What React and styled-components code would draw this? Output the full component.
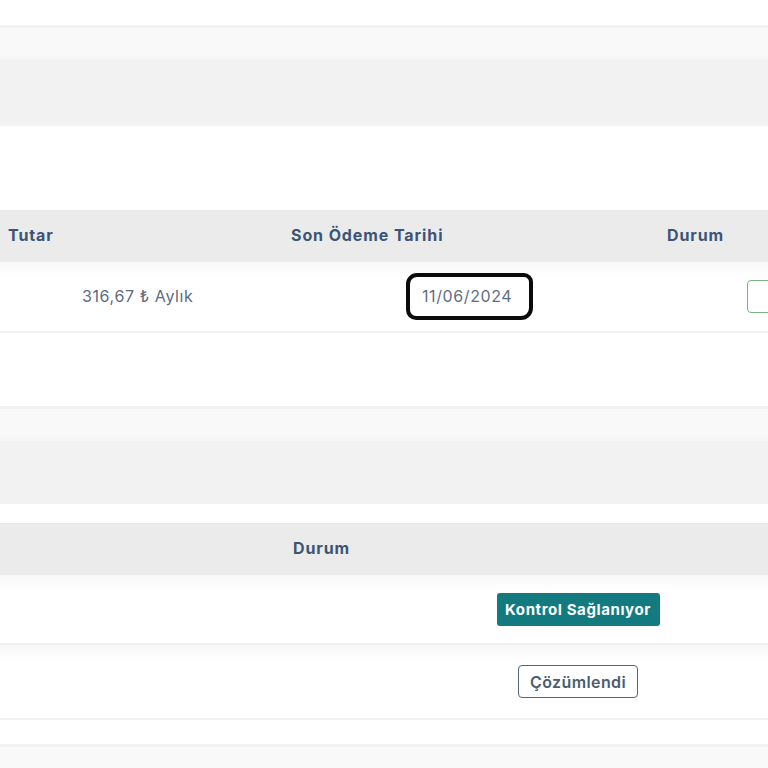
import React from 'react';
import styled, { createGlobalStyle } from 'styled-components';

const GlobalStyle = createGlobalStyle`
  html, body {
    margin: 0;
    padding: 0;
    background: #ffffff;
    overflow: hidden;
  }
  body {
    font-family: Inter, "Open Sans", Arial, sans-serif;
    color: #5b6b80;
  }
`;

const Page = styled.div`
  width: 768px;
  height: 768px;
  overflow: hidden;
  display: flex;
  flex-direction: column;
  padding-top: ${(p) => p.top}px;
  box-sizing: border-box;
`;

const Spacer = styled.div`
  flex: none;
  height: ${(p) => p.h}px;
`;

const Panel = styled.div`
  flex: none;
  border-top: 3px solid #f2f2f2;
  border-bottom: ${(p) => (p.bottomLine ? '2px solid #f4f4f4' : 'none')};
`;

const PanelHead = styled.div`
  height: ${(p) => p.h}px;
  background: linear-gradient(#f9f9f9, #f9f9f9 80%, #f5f5f5);
`;

const PanelBody = styled.div`
  height: ${(p) => p.h}px;
  background: #f2f2f2;
`;

const Table = styled.div`
  flex: none;
  width: 900px;
`;

const HeadRow = styled.div`
  display: grid;
  grid-template-columns: ${(p) => p.cols};
  height: 52px;
  align-items: center;
  background: #ebebeb;
  border-top: 1px solid #e8e8e8;
  box-sizing: border-box;
  padding-bottom: 3px;
`;

const HeadCell = styled.div`
  padding-left: ${(p) => p.pl || 0}px;
  font-size: 16px;
  font-weight: 700;
  color: #3c5574;
  letter-spacing: 0.9px;
  white-space: nowrap;
`;

const Row = styled.div`
  display: grid;
  grid-template-columns: ${(p) => p.cols};
  height: ${(p) => p.h}px;
  align-items: center;
  background: linear-gradient(#f7f7f7, #ffffff 22%);
  border-bottom: 2px solid #f1f1f1;
  box-sizing: border-box;
  padding-bottom: ${(p) => p.pb || 0}px;
`;

const Cell = styled.div`
  padding-left: ${(p) => p.pl || 0}px;
  display: flex;
  justify-content: ${(p) => (p.center ? 'center' : 'flex-start')};
  font-size: 16px;
  letter-spacing: 0.6px;
  color: #5b6b80;
  white-space: nowrap;
`;

const DateMark = styled.span`
  display: inline-flex;
  align-items: center;
  width: 127px;
  height: 47px;
  box-sizing: border-box;
  padding-left: 12px;
  border: 4px solid #0b0b0b;
  border-radius: 11px 9px 12px 10px;
  font-size: 16px;
  letter-spacing: 0.6px;
  color: #5f6e82;
`;

const OutlineTag = styled.span`
  display: inline-flex;
  align-items: center;
  justify-content: center;
  box-sizing: border-box;
  height: 33px;
  width: ${(p) => p.w}px;
  border: 1.5px solid ${(p) => p.line};
  border-radius: 4px;
  background: #ffffff;
  font-size: 16px;
  font-weight: 600;
  letter-spacing: 0.4px;
  color: #4a5d72;
`;

const SolidTag = styled.span`
  display: inline-flex;
  align-items: center;
  justify-content: center;
  box-sizing: border-box;
  height: 33px;
  width: 163px;
  border-radius: 3px;
  background: #137b80;
  font-size: 15px;
  font-weight: 700;
  color: #ffffff;
  letter-spacing: 0.6px;
`;

const paymentCols = '200px 360px 340px';
const ticketCols = '250px 200px 256px 194px';

export default function App() {
  return (
    <>
      <GlobalStyle />
      <Page top={25}>
        <Panel bottomLine>
          <PanelHead h={32} />
          <PanelBody h={64} />
        </Panel>

        <Spacer h={84} />

        <Table>
          <HeadRow cols={paymentCols}>
            <HeadCell pl={8}>Tutar</HeadCell>
            <HeadCell pl={91}>Son Ödeme Tarihi</HeadCell>
            <HeadCell pl={107}>Durum</HeadCell>
          </HeadRow>
          <Row cols={paymentCols} h={71} pb={1}>
            <Cell pl={82}>316,67 ₺ Aylık</Cell>
            <Cell pl={206}>
              <DateMark>11/06/2024</DateMark>
            </Cell>
            <Cell pl={187}>
              <OutlineTag w={120} line="#7fb27f" />
            </Cell>
          </Row>
        </Table>

        <Spacer h={73} />

        <Panel>
          <PanelHead h={32} />
          <PanelBody h={63} />
        </Panel>

        <Spacer h={19} />

        <Table>
          <HeadRow cols={ticketCols}>
            <HeadCell />
            <HeadCell pl={43}>Durum</HeadCell>
            <HeadCell />
            <HeadCell />
          </HeadRow>
          <Row cols={ticketCols} h={70}>
            <Cell />
            <Cell />
            <Cell center>
              <SolidTag>Kontrol Sağlanıyor</SolidTag>
            </Cell>
            <Cell />
          </Row>
          <Row cols={ticketCols} h={75}>
            <Cell />
            <Cell />
            <Cell center>
              <OutlineTag w={120} line="#52677c">Çözümlendi</OutlineTag>
            </Cell>
            <Cell />
          </Row>
        </Table>

        <Spacer h={24} />

        <Panel>
          <PanelHead h={40} />
        </Panel>
      </Page>
    </>
  );
}
